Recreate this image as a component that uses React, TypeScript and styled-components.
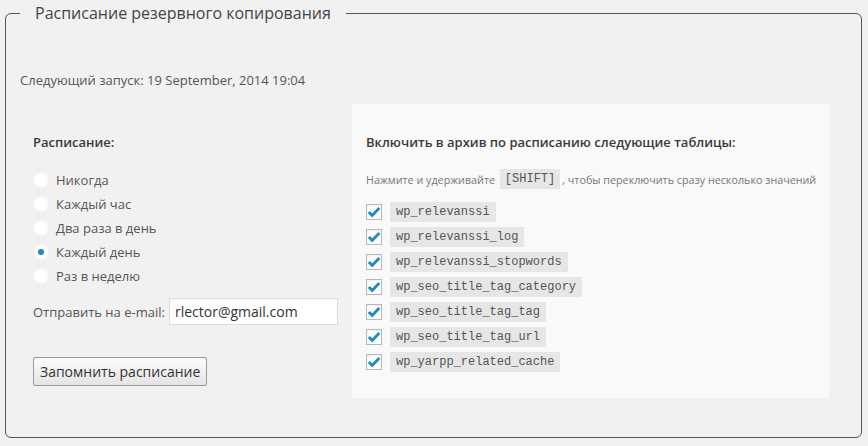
import React from "react";
import styled, { createGlobalStyle } from "styled-components";

const GlobalStyle = createGlobalStyle`
  html, body {
    margin: 0;
    padding: 0;
    background: #f1f1f1;
    font-family: "Open Sans", "Liberation Sans", sans-serif;
  }
  * { box-sizing: border-box; }
`;

const Page = styled.div`
  padding: 0 6px 0 5px;
  width: 868px;
  height: 446px;
`;

const Fieldset = styled.fieldset`
  margin: 0;
  border: 1px solid #555;
  border-radius: 6px;
  padding: 0 14px 39px;
  min-width: 0;
`;

const Legend = styled.legend`
  padding: 0 15px;
  font-size: 16px;
  line-height: 27px;
  color: #444;
`;

const NextRun = styled.p`
  margin: 44px 0 14px;
  font-size: 13px;
  line-height: 19px;
  color: #555;
`;

const Columns = styled.div`
  display: flex;
  align-items: flex-start;
`;

const LeftColumn = styled.div`
  flex: 0 0 332px;
  padding: 29px 0 0 13px;
`;

const SectionTitle = styled.h4`
  margin: 0;
  font-size: 13px;
  line-height: 19px;
  font-weight: 600;
  color: #3a3a3a;
`;

const RadioList = styled.div`
  display: flex;
  flex-direction: column;
  margin-top: 16px;
`;

const RadioRow = styled.label`
  display: flex;
  align-items: center;
  height: 24px;
  gap: 7px;
  font-size: 13px;
  color: #555;
`;

const RadioDot = styled.span<{ $checked?: boolean }>`
  position: relative;
  width: 16px;
  height: 16px;
  border-radius: 50%;
  background: #fff;
  border: 1px solid #f4f4f4;
  flex: 0 0 16px;
  &::after {
    content: "";
    display: ${(p) => (p.$checked ? "block" : "none")};
    position: absolute;
    left: 4px;
    top: 4px;
    width: 6px;
    height: 6px;
    border-radius: 50%;
    background: #1e8cbe;
  }
`;

const EmailRow = styled.div`
  display: flex;
  align-items: center;
  gap: 4px;
  margin-top: 10px;
  font-size: 13px;
  color: #555;
`;

const EmailInput = styled.input`
  width: 169px;
  height: 27px;
  border: 1px solid #ddd;
  background: #fff;
  padding: 0 5px;
  font-family: inherit;
  font-size: 14px;
  color: #333;
  outline: none;
  box-shadow: inset 0 1px 2px rgba(0, 0, 0, 0.04);
`;

const SaveButton = styled.button`
  margin-top: 32px;
  height: 29px;
  padding: 0 6px;
  font-family: inherit;
  font-size: 14px;
  color: #333;
  border: 1px solid #999;
  border-radius: 2px;
  background: linear-gradient(#fcfcfc, #e4e4e4);
  cursor: pointer;
`;

const Panel = styled.div`
  width: 477px;
  background: #f9f9f9;
  padding: 29px 14px 24px;
`;

const Hint = styled.p`
  margin: 18px 0 0;
  font-size: 10.75px;
  line-height: 20px;
  color: #777;
  white-space: nowrap;
`;

const Kbd = styled.code`
  display: inline-block;
  margin: 0 2px;
  padding: 0 5px;
  line-height: 20px;
  vertical-align: middle;
  position: relative;
  top: -2px;
  font-family: "Liberation Mono", "DejaVu Sans Mono", monospace;
  font-size: 12px;
  color: #555;
  background: #e6e6e6;
`;

const TableList = styled.div`
  display: flex;
  flex-direction: column;
  margin-top: 8px;
`;

const TableRow = styled.label`
  display: flex;
  align-items: center;
  height: 25px;
  gap: 8px;
`;

const CheckBox = styled.span`
  display: flex;
  align-items: center;
  justify-content: center;
  width: 16px;
  height: 16px;
  flex: 0 0 16px;
  background: #fff;
  border: 1px solid #b4b9be;
  box-shadow: inset 0 1px 2px rgba(0, 0, 0, 0.07);
`;

const TableName = styled.code`
  display: inline-block;
  padding: 0 6px;
  height: 20px;
  line-height: 20px;
  font-family: "Liberation Mono", "DejaVu Sans Mono", monospace;
  font-size: 12px;
  color: #555;
  background: #e6e6e6;
`;

const Check = () => (
  <svg width="14" height="14" viewBox="0 0 14 14">
    <path d="M1.8 7 L5.2 10.4 L12.3 3" fill="none" stroke="#1e8cbe" strokeWidth="2.9" />
  </svg>
);

const schedules = ["Никогда", "Каждый час", "Два раза в день", "Каждый день", "Раз в неделю"];
const tables = [
  "wp_relevanssi",
  "wp_relevanssi_log",
  "wp_relevanssi_stopwords",
  "wp_seo_title_tag_category",
  "wp_seo_title_tag_tag",
  "wp_seo_title_tag_url",
  "wp_yarpp_related_cache",
];

export default function App() {
  return (
    <>
      <GlobalStyle />
      <Page>
        <Fieldset>
          <Legend>Расписание резервного копирования</Legend>
          <NextRun>Следующий запуск: 19 September, 2014 19:04</NextRun>
          <Columns>
            <LeftColumn>
              <SectionTitle>Расписание:</SectionTitle>
              <RadioList>
                {schedules.map((s) => (
                  <RadioRow key={s}>
                    <RadioDot $checked={s === "Каждый день"} />
                    {s}
                  </RadioRow>
                ))}
              </RadioList>
              <EmailRow>
                Отправить на e-mail:
                <EmailInput defaultValue="rlector@gmail.com" />
              </EmailRow>
              <SaveButton>Запомнить расписание</SaveButton>
            </LeftColumn>
            <Panel>
              <SectionTitle>Включить в архив по расписанию следующие таблицы:</SectionTitle>
              <Hint>
                Нажмите и удерживайте <Kbd>[SHIFT]</Kbd>, чтобы переключить сразу несколько значений
              </Hint>
              <TableList>
                {tables.map((t) => (
                  <TableRow key={t}>
                    <CheckBox>
                      <Check />
                    </CheckBox>
                    <TableName>{t}</TableName>
                  </TableRow>
                ))}
              </TableList>
            </Panel>
          </Columns>
        </Fieldset>
      </Page>
    </>
  );
}
